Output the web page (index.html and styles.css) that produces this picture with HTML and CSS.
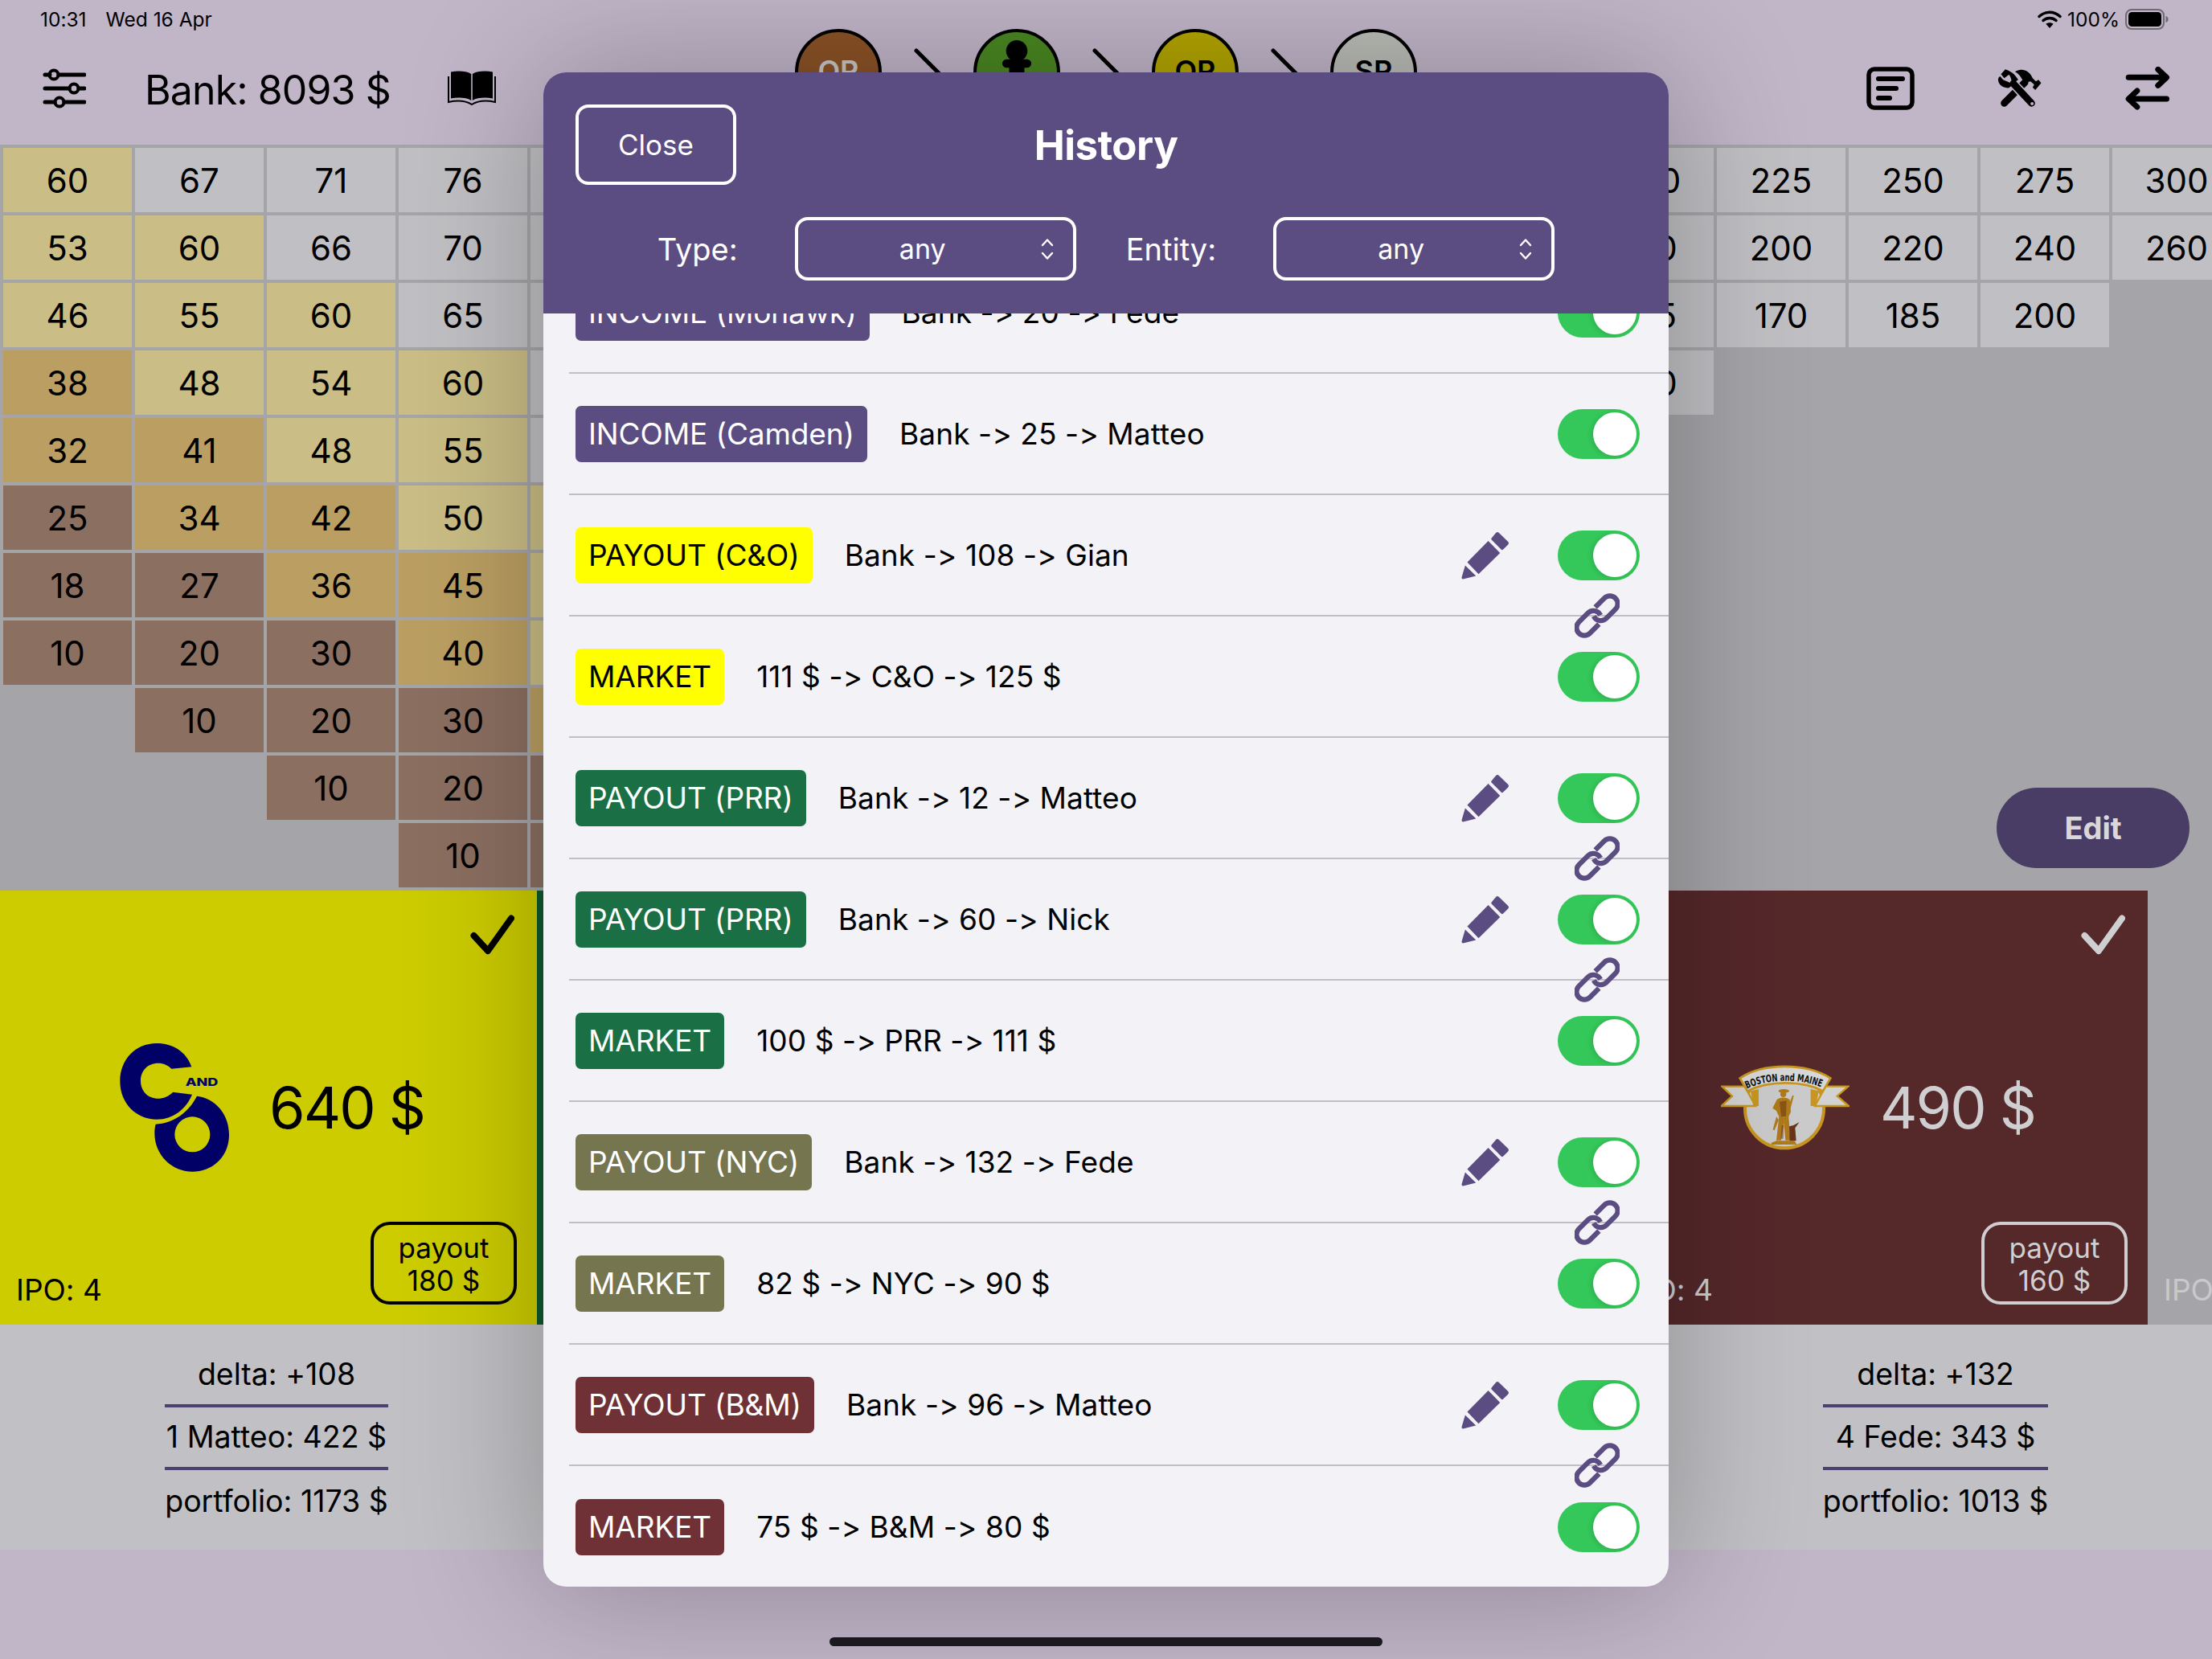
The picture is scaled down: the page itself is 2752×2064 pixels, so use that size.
FILE: index.html
```html
<!DOCTYPE html>
<html lang="en">
<head>
<meta charset="utf-8">
<title>History</title>
<link rel="stylesheet" href="styles.css">
</head>
<body>
<div class="page">
  <div class="status">
    <div class="status-left"><span>10:31</span><span>Wed 16 Apr</span></div>
    <div class="status-right">
      <svg class="wifi" viewBox="0 0 30 24"><path d="M2 8.500C9.500 1.500 20.500 1.500 28 8.500" fill="none" stroke="#000" stroke-width="3.400" stroke-linecap="round"/><path d="M7 13.500C11.500 9.500 18.500 9.500 23 13.500" fill="none" stroke="#000" stroke-width="3.400" stroke-linecap="round"/><path d="M15 23l-4.600-5.200c2.600-2 6.600-2 9.200 0z" fill="#000"/></svg>
      <span>100%</span>
      <svg class="battery" viewBox="0 0 54 26"><rect x="1" y="1" width="47" height="24" rx="7" fill="none" stroke="#6e6a72" stroke-width="2"/><rect x="4" y="4" width="41" height="18" rx="4.500" fill="#000"/><path d="M50.500 9c2 .5 3 2 3 4s-1 3.500-3 4z" fill="#6e6a72"/></svg>
    </div>
  </div>

  <header class="toolbar">
    <div class="tool-left">
      <svg class="i-sliders" viewBox="0 0 54 52"><g stroke="#000" stroke-width="5" stroke-linecap="round" fill="none"><path d="M3 9h6M20 9h32"/><path d="M3 26h30M45 26h7"/><path d="M3 43h12M27 43h25"/></g><g stroke="#000" stroke-width="4" fill="none"><circle cx="14" cy="9" r="5.500"/><circle cx="39" cy="26" r="5.500"/><circle cx="21" cy="43" r="5.500"/></g></svg>
      <span class="bank">Bank: 8093 $</span>
      <svg class="i-book" viewBox="0 0 60 44"><path d="M4 1.500C12 0 23 0 29.200 4V37C23 33 12 33 4 34.500Z" fill="#000"/><path d="M56 1.500C48 0 37 0 30.800 4V37C37 33 48 33 56 34.500Z" fill="#000"/><path d="M1 7V39C10 37 22 37 30 42C38 37 50 37 59 39V7" fill="none" stroke="#000" stroke-width="2"/></svg>
    </div>
    <div class="tokens">
      <div class="token t-or1">OR</div>
      <svg class="arrow-line" viewBox="0 0 114 60"><path d="M43 27L90 74" stroke="#000" stroke-width="5" stroke-linecap="round"/></svg>
      <div class="token t-p"><svg class="pawn" viewBox="0 0 40 60"><circle cx="20" cy="14" r="14"/><rect x="1" y="25" width="38" height="11" rx="5.500"/><rect x="10" y="30" width="20" height="30"/></svg></div>
      <svg class="arrow-line" viewBox="0 0 114 60"><path d="M43 27L90 74" stroke="#000" stroke-width="5" stroke-linecap="round"/></svg>
      <div class="token t-or2">OR</div>
      <svg class="arrow-line" viewBox="0 0 114 60"><path d="M43 27L90 74" stroke="#000" stroke-width="5" stroke-linecap="round"/></svg>
      <div class="token t-sr">SR</div>
    </div>
    <div class="tool-right">
      <svg class="i-list" viewBox="0 0 60 54"><rect x="3" y="3" width="54" height="48" rx="7" fill="none" stroke="#000" stroke-width="5.500"/><g stroke="#000" stroke-width="6" stroke-linecap="round"><path d="M15 15H45M15 27H37M15 39H29"/></g></svg>
      <svg class="i-tools" viewBox="550 75 170 150"><path d="M578 205L655 128" stroke="#000" stroke-width="26" stroke-linecap="round"/><path d="M618 88C640 72 672 80 684 112L696 124L706 118L716 130L694 156L684 146L690 136L676 124C664 128 654 126 646 118C640 108 634 96 618 88Z" fill="#000"/><path d="M612 132L680 205" stroke="#c1b5c8" stroke-width="36"/><path d="M612 132L680 205" stroke="#000" stroke-width="26" stroke-linecap="round"/><circle cx="682" cy="207" r="6" fill="#c1b5c8"/><path d="M582 79L566 97L578 112L596 98C604 110 608 124 604 136L630 118C622 104 610 88 582 79Z" fill="#000"/><path d="M556 112C552 130 568 150 596 148L612 134L574 118L562 104Z" fill="#000"/></svg>
      <svg class="i-swap" viewBox="1030 70 170 165"><g fill="none" stroke="#000" stroke-width="21" stroke-linecap="round" stroke-linejoin="round"><path d="M1045 110H1185M1155 80L1187 110L1155 140"/><path d="M1187 190H1047M1077 160L1045 190L1077 220"/></g></svg>
    </div>
  </header>

  <section class="market">
    <div class="col"><div class="c lt">60</div><div class="c lt">53</div><div class="c lt">46</div><div class="c dt">38</div><div class="c dt">32</div><div class="c br">25</div><div class="c br">18</div><div class="c br">10</div></div>
    <div class="col"><div class="c">67</div><div class="c lt">60</div><div class="c lt">55</div><div class="c lt">48</div><div class="c dt">41</div><div class="c dt">34</div><div class="c br">27</div><div class="c br">20</div><div class="c br">10</div></div>
    <div class="col"><div class="c">71</div><div class="c">66</div><div class="c lt">60</div><div class="c lt">54</div><div class="c lt">48</div><div class="c dt">42</div><div class="c dt">36</div><div class="c br">30</div><div class="c br">20</div><div class="c br">10</div></div>
    <div class="col"><div class="c">76</div><div class="c">70</div><div class="c">65</div><div class="c lt">60</div><div class="c lt">55</div><div class="c lt">50</div><div class="c dt">45</div><div class="c dt">40</div><div class="c br">30</div><div class="c br">20</div><div class="c br">10</div></div>
    <div class="col"><div class="c"></div><div class="c"></div><div class="c"></div><div class="c"></div><div class="c"></div><div class="c lt"></div><div class="c lt"></div><div class="c lt"></div><div class="c dt"></div><div class="c br"></div><div class="c br"></div></div>
    <div class="col-skip"></div>
    <div class="col"><div class="c">200</div><div class="c">180</div><div class="c">155</div><div class="c">130</div></div>
    <div class="col"><div class="c">225</div><div class="c">200</div><div class="c">170</div></div>
    <div class="col"><div class="c">250</div><div class="c">220</div><div class="c">185</div></div>
    <div class="col"><div class="c">275</div><div class="c">240</div><div class="c">200</div></div>
    <div class="col"><div class="c">300</div><div class="c">260</div></div>
    <button class="edit">Edit</button>
  </section>

  <section class="cards">
    <article class="card card-co">
      <div class="card-top"><svg class="check" viewBox="0 0 55 50"><path d="M4.500 26L22 45L51 4.500" fill="none" stroke="currentColor" stroke-width="8" stroke-linecap="round" stroke-linejoin="round"/></svg></div>
      <div class="card-mid">
        <svg class="logo" viewBox="111 114 480 480"><path fill="#000066" d="M415 202C395 145 345 114 285 114C205 114 148 175 148 255C148 340 210 398 285 398C345 398 395 360 417 305L345 296C330 312 310 320 290 320C252 320 225 292 225 254C225 216 252 188 290 188C310 188 328 196 340 209Z"/><path fill="#000066" fill-rule="evenodd" d="M435 311C500 318 555 375 555 455C555 535 495 593 418 593C340 593 277 530 277 450C277 438 278 426 281 416C350 412 405 370 435 311ZM418 388A66 66 0 1 0 418 520A66 66 0 1 0 418 388Z"/><text class="logo-and" x="392" y="272" textLength="122" lengthAdjust="spacingAndGlyphs">AND</text></svg>
        <span class="amount">640 $</span>
      </div>
      <div class="card-bot"><span class="ipo">IPO: 4</span><div class="payout">payout<br>180 $</div></div>
    </article>
    <article class="card card-prr"></article>
    <article class="card card-nyc"></article>
    <article class="card card-bm">
      <div class="card-top"><svg class="check" viewBox="0 0 55 50"><path d="M4.500 26L22 45L51 4.500" fill="none" stroke="currentColor" stroke-width="8" stroke-linecap="round" stroke-linejoin="round"/></svg></div>
      <div class="card-mid">
        <svg class="logo" viewBox="93 -6 480 480">
          <circle cx="330" cy="238" r="147" fill="#cbcbcb" stroke="#c8961f" stroke-width="12"/>
          <path d="M97 155H182L222 228H95L135 191Z" fill="#d2d2d2" stroke="#c8961f" stroke-width="7"/>
          <path d="M568 155H484L444 228H570L527 191Z" fill="#d2d2d2" stroke="#c8961f" stroke-width="7"/>
          <path d="M204 172L214 228H234V165ZM458 172L448 228H428V165Z" fill="#c8961f"/>
          <path d="M164 124C250 66 410 66 502 124L474 172C400 132 270 132 192 172Z" fill="#d8d8d8" stroke="#c8961f" stroke-width="8"/>
          <path id="bm-arc" d="M190 164C270 124 400 124 482 164" fill="none"/>
          <text class="logo-bm"><textPath href="#bm-arc" textLength="284" lengthAdjust="spacingAndGlyphs">BOSTON and MAINE</textPath></text>
          <g fill="#b07a1a">
            <ellipse cx="328" cy="172" rx="20" ry="7"/>
            <circle cx="326" cy="184" r="11"/>
            <path d="M302 204C316 194 336 194 350 204L354 250L346 268L352 356H334L328 292L318 356H300L310 268L300 246L286 236Z"/>
            <path d="M346 226L360 188L365 190L352 240Z"/>
            <path d="M300 268L287 316L293 319L309 280Z"/>
            <path d="M280 366L300 358H368L376 372H284Z"/>
          </g>
          <g fill="#6a3418">
            <path d="M312 212L338 208L336 266L318 268Z" opacity=".55"/>
            <path d="M348 304L364 300L386 288L370 310L374 358H350Z"/>
            <path d="M320 300L328 300L326 350L316 350Z" opacity=".5"/>
          </g>
        </svg>
        <span class="amount">490 $</span>
      </div>
      <div class="card-bot"><span class="ipo">IPO: 4</span><div class="payout">payout<br>160 $</div></div>
    </article>
    <article class="card card-next"><div class="card-top"></div><div class="card-mid"></div><div class="card-bot"><span class="ipo">IPO: 4</span></div></article>
  </section>

  <section class="info">
    <div class="info-col"><div class="info-box"><div class="info-line">delta: +108</div><div class="info-line">1 Matteo: 422 $</div><div class="info-line">portfolio: 1173 $</div></div></div>
    <div class="info-col"></div>
    <div class="info-col"></div>
    <div class="info-col"><div class="info-box"><div class="info-line">delta: +132</div><div class="info-line">4 Fede: 343 $</div><div class="info-line">portfolio: 1013 $</div></div></div>
  </section>

  <footer class="home"><div class="home-bar"></div></footer>

  <div class="modal">
    <div class="modal-head">
      <div class="head-top">
        <button class="close">Close</button>
        <h1 class="title">History</h1>
        <div></div>
      </div>
      <div class="filters">
        <div class="filter"><span class="f-label">Type:</span><div class="select"><span>any</span><svg class="updown" viewBox="0 0 16 28"><path d="M2 9L8 2.500L14 9M2 19L8 25.500L14 19" fill="none" stroke="#fff" stroke-width="2.400" stroke-linecap="round" stroke-linejoin="round"/></svg></div></div>
        <div class="filter"><span class="f-label">Entity:</span><div class="select"><span>any</span><svg class="updown" viewBox="0 0 16 28"><path d="M2 9L8 2.500L14 9M2 19L8 25.500L14 19" fill="none" stroke="#fff" stroke-width="2.400" stroke-linecap="round" stroke-linejoin="round"/></svg></div></div>
      </div>
    </div>
    <div class="list">
      <div class="row first"><span class="tag tag-inc">INCOME (Mohawk)</span><span class="desc">Bank -&gt; 20 -&gt; Fede</span><span class="sw"></span></div>
      <div class="row"><span class="tag tag-inc">INCOME (Camden)</span><span class="desc">Bank -&gt; 25 -&gt; Matteo</span><span class="sw"></span></div>
      <div class="row"><span class="tag tag-co">PAYOUT (C&amp;O)</span><span class="desc">Bank -&gt; 108 -&gt; Gian</span><svg class="pencil"><use href="#i-pencil"/></svg><span class="sw"></span><svg class="link"><use href="#i-link"/></svg></div>
      <div class="row"><span class="tag tag-co">MARKET</span><span class="desc">111 $ -&gt; C&amp;O -&gt; 125 $</span><span class="sw"></span></div>
      <div class="row"><span class="tag tag-prr">PAYOUT (PRR)</span><span class="desc">Bank -&gt; 12 -&gt; Matteo</span><svg class="pencil"><use href="#i-pencil"/></svg><span class="sw"></span><svg class="link"><use href="#i-link"/></svg></div>
      <div class="row"><span class="tag tag-prr">PAYOUT (PRR)</span><span class="desc">Bank -&gt; 60 -&gt; Nick</span><svg class="pencil"><use href="#i-pencil"/></svg><span class="sw"></span><svg class="link"><use href="#i-link"/></svg></div>
      <div class="row"><span class="tag tag-prr">MARKET</span><span class="desc">100 $ -&gt; PRR -&gt; 111 $</span><span class="sw"></span></div>
      <div class="row"><span class="tag tag-nyc">PAYOUT (NYC)</span><span class="desc">Bank -&gt; 132 -&gt; Fede</span><svg class="pencil"><use href="#i-pencil"/></svg><span class="sw"></span><svg class="link"><use href="#i-link"/></svg></div>
      <div class="row"><span class="tag tag-nyc">MARKET</span><span class="desc">82 $ -&gt; NYC -&gt; 90 $</span><span class="sw"></span></div>
      <div class="row"><span class="tag tag-bm">PAYOUT (B&amp;M)</span><span class="desc">Bank -&gt; 96 -&gt; Matteo</span><svg class="pencil"><use href="#i-pencil"/></svg><span class="sw"></span><svg class="link"><use href="#i-link"/></svg></div>
      <div class="row last"><span class="tag tag-bm">MARKET</span><span class="desc">75 $ -&gt; B&amp;M -&gt; 80 $</span><span class="sw"></span></div>
    </div>
  </div>
</div>

<svg class="defs" width="0" height="0">
  <symbol id="i-pencil" viewBox="352 120 184 184"><path fill="#5b4d82" d="M484 126Q490 120 496 126L530 159Q536 165 530 171L512 189Q508 193 504 189L468 153Q464 149 468 145ZM455 157L500 203L418 283L375 238ZM367 250L408 290L362 302Q352 304 354 294Z"/></symbol>
  <symbol id="i-link" viewBox="775 350 172 172"><g fill="none" stroke="#5b4d82" stroke-width="19"><path transform="translate(892 408) rotate(-45)" d="M-24 -30H25A30 30 0 0 1 25 30H-25A30 30 0 0 1 -52 -10"/><path transform="translate(830 464) rotate(135)" d="M-24 -30H25A30 30 0 0 1 25 30H-25A30 30 0 0 1 -52 -10"/></g></symbol>
</svg>
</body>
</html>
```

FILE: styles.css
```css
* { box-sizing: border-box; }
html, body { margin: 0; padding: 0; }
body {
  width: 2752px;
  height: 2064px;
  overflow: hidden;
  font-family: Inter, "Liberation Sans", sans-serif;
  font-variant-ligatures: none;
  font-feature-settings: "calt" 0;
  color: #000;
  background: #c1b5c8;
}
.page { position: relative; width: 2752px; height: 2064px; overflow: hidden; }
.defs { position: absolute; }

.status {
  height: 36px;
  padding: 11px 50px 0;
  display: flex;
  justify-content: space-between;
  font-size: 24.500px;
  line-height: 26px;
}
.status-left { display: flex; gap: 24px; }
.status-right { display: flex; align-items: center; gap: 7px; padding-right: 4px; }
.wifi { width: 30px; height: 24px; }
.battery { width: 54px; height: 26px; }

.toolbar {
  height: 144px;
  display: grid;
  grid-template-columns: 1fr auto 1fr;
  align-items: start;
}
.tool-left { display: flex; align-items: center; height: 148px; padding-left: 53px; }
.bank { font-size: 50px; line-height: 60px; margin-left: 73px; letter-spacing: -0.9px; padding-top: 3px; }
.i-sliders { width: 54px; height: 52px; }
.i-book { width: 60px; height: 44px; margin-left: 71px; }
.tokens { display: flex; align-items: flex-start; width: 774px; height: 54px; overflow: hidden; }
.token {
  flex: none;
  width: 108px;
  height: 108px;
  border-radius: 50%;
  border: 4px solid #000;
  text-align: center;
  font-size: 36px;
  font-weight: 600;
  line-height: 1;
  padding-top: 30px;
}
.t-or1 { background: #8b5226; color: #c8c8c8; }
.t-p { background: #4a8722; padding-top: 10px; }
.t-or2 { background: #b3a500; }
.t-sr { background: #babcb6; }
.pawn { display: block; width: 38px; height: 57px; margin: 0 auto; }
.arrow-line { flex: none; width: 114px; height: 60px; }
.tool-right { display: flex; align-items: center; justify-content: flex-end; height: 148px; padding-right: 52px; gap: 102px; }
.i-list { width: 60px; height: 54px; }
.i-tools { width: 57px; height: 50px; }
.i-swap { width: 57px; height: 55px; }

.market {
  position: relative;
  height: 928px;
  background: #a5a5a9;
  display: flex;
  gap: 4px;
  padding: 4px;
  overflow: hidden;
}
.col { flex: none; width: 160px; display: flex; flex-direction: column; gap: 4px; }
.col-skip { flex: none; width: 1144px; }
.c {
  height: 80px;
  background: #c0c0c4;
  display: flex;
  align-items: center;
  justify-content: center;
  font-size: 42px;
  padding-top: 1px;
}
.c.lt { background: #cabd85; }
.c.dt { background: #bb9f62; }
.c.br { background: #8b6f61; }
.edit {
  position: absolute;
  left: 2484px;
  top: 800px;
  width: 240px;
  height: 100px;
  border: 0;
  border-radius: 50px;
  background: #493d66;
  color: #d8d8dc;
  font: 700 38px Inter, sans-serif;
}

.cards { display: flex; height: 540px; overflow: hidden; background: #a5a5a9; }
.card {
  flex: none;
  width: 668px;
  display: grid;
  grid-template-rows: 1fr auto 1fr;
  padding: 25px 25px 25px 20px;
}
.card-co { background: #cccc00; color: #000; }
.card-prr { background: #0f5a2e; }
.card-nyc { background: #75754f; }
.card-bm { background: #55282a; color: #cfcfd1; }
.card-next { color: #c9c9cc; }
.card-top { display: flex; justify-content: flex-end; align-items: flex-start; padding: 5px 3px 0 0; }
.check { width: 55px; height: 50px; }
.card-mid { display: flex; align-items: center; justify-content: center; gap: 38px; padding-left: 2px; }
.logo { width: 160px; height: 160px; }
.logo-and { font: 800 40px Inter, sans-serif; fill: #000066; }
.logo-bm { font: 700 38px "DejaVu Sans Condensed", "Liberation Sans", sans-serif; fill: #111; }
.amount { font-size: 72px; line-height: 90px; letter-spacing: -2px; }
.card-bot { display: flex; justify-content: space-between; align-items: flex-end; }
.ipo { font-size: 37px; line-height: 1; }
.payout {
  width: 182px;
  height: 103px;
  border: 4px solid currentColor;
  border-radius: 24px;
  text-align: center;
  font-size: 35px;
  line-height: 41px;
  padding-top: 8px;
}

.info {
  height: 280px;
  background: #c1c1c5;
  display: grid;
  grid-template-columns: repeat(4, 1fr);
}
.info-col { display: flex; justify-content: center; padding-top: 25px; }
.info-box { display: flex; flex-direction: column; align-self: flex-start; }
.info-line {
  height: 78px;
  padding-bottom: 2px;
  display: flex;
  align-items: center;
  justify-content: center;
  font-size: 37.500px;
  border-bottom: 4px solid #4c4070;
}
.info-line:last-child { border-bottom: 0; }

.home { height: 136px; padding-top: 109px; display: flex; justify-content: center; }
.home-bar { width: 688px; height: 11px; border-radius: 6px; background: #1d1b20; }

.modal {
  position: absolute;
  left: 676px;
  top: 90px;
  width: 1400px;
  height: 1884px;
  border-radius: 28px;
  background: #f2f2f7;
  overflow: hidden;
  display: flex;
  flex-direction: column;
  box-shadow: 0 0 170px rgba(0, 0, 0, .28);
}
.modal-head {
  flex: none;
  height: 300px;
  background: #5b4d82;
  color: #fff;
  padding: 40px 40px 0;
}
.head-top { display: grid; grid-template-columns: 1fr auto 1fr; align-items: center; height: 100px; }
.close {
  width: 200px;
  height: 100px;
  border: 4px solid #fff;
  border-radius: 16px;
  background: transparent;
  color: #fff;
  font: 400 35px Inter, sans-serif;
}
.title { margin: 0; font-size: 51px; font-weight: 700; line-height: 60px; letter-spacing: -0.5px; padding-top: 2px; }
.filters { display: flex; justify-content: center; gap: 62px; margin-top: 40px; }
.filter { display: flex; align-items: center; gap: 71px; }
.f-label { font-size: 38px; }
.select {
  width: 350px;
  height: 79px;
  border: 4px solid #fff;
  border-radius: 16px;
  display: grid;
  grid-template-columns: 1fr 16px;
  align-items: center;
  text-align: center;
  padding: 0 24px 0 8px;
  font-size: 34px;
}
.updown { width: 16px; height: 28px; }

.list { flex: 1; overflow: hidden; }
.row {
  position: relative;
  height: 151px;
  margin-left: 32px;
  padding: 0 36px 0 8px;
  display: flex;
  align-items: center;
  border-bottom: 2px solid #c0bec6;
}
.row.first { margin-top: -76px; }
.row.last { border-bottom: 0; }
.tag {
  flex: none;
  height: 70px;
  padding: 0 16px;
  border-radius: 7px;
  display: flex;
  align-items: center;
  font-size: 37px;
  color: #fff;
  letter-spacing: -0.1px;
}
.tag-inc { background: #5b4d82; }
.tag-co { background: #ffff00; color: #000; }
.tag-prr { background: #1a7044; }
.tag-nyc { background: #75754f; }
.tag-bm { background: #6f3135; }
.desc { margin-left: 40px; font-size: 37px; letter-spacing: 0.1px; }
.pencil { width: 60px; height: 60px; margin-left: auto; margin-right: 60px; }
.sw {
  flex: none;
  position: relative;
  width: 102px;
  height: 62px;
  border-radius: 31px;
  background: #34c759;
  margin-left: auto;
}
.pencil + .sw { margin-left: 0; }
.sw::after {
  content: "";
  position: absolute;
  right: 4px;
  top: 4px;
  width: 54px;
  height: 54px;
  border-radius: 50%;
  background: #fff;
  box-shadow: -2px 1px 6px rgba(0, 0, 0, .12);
}
.link {
  position: absolute;
  right: 61px;
  bottom: -29px;
  width: 56px;
  height: 56px;
  z-index: 2;
}
```
